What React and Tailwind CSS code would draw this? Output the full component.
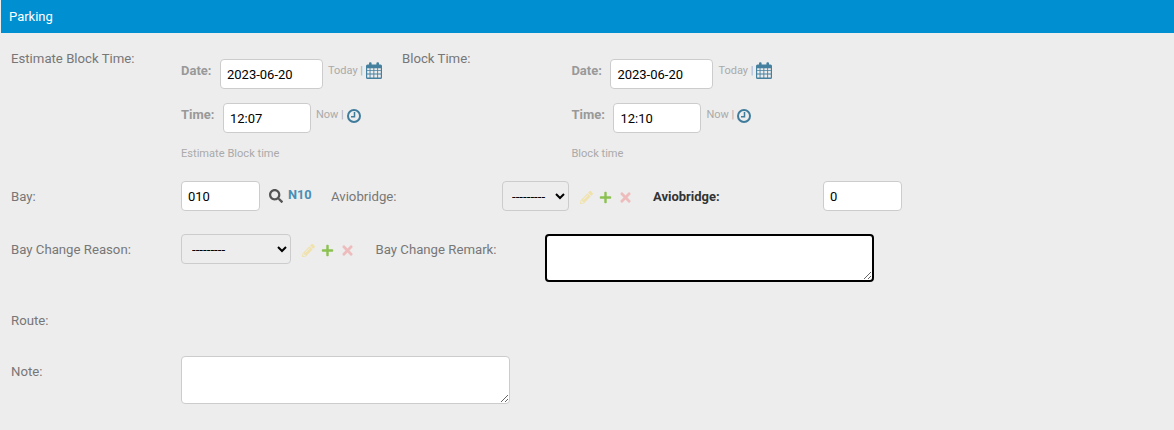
import React from 'react';
import { FaSearch, FaPencilAlt, FaPlus, FaTimes } from 'react-icons/fa';

const CalendarIcon = () => (
  <svg width="16" height="17" viewBox="0 0 16 17" className="text-[#45809f]">
    <path fill="currentColor" fillRule="evenodd" d="M1.5 2.5H3V1.2a1 1 0 0 1 1-1h.6a1 1 0 0 1 1 1v1.3h4.8V1.2a1 1 0 0 1 1-1h.6a1 1 0 0 1 1 1v1.3h1.5A1.5 1.5 0 0 1 16 4v11.5a1.5 1.5 0 0 1-1.5 1.5h-13A1.5 1.5 0 0 1 0 15.500V4a1.500 1.500 0 0 1 1.500-1.500ZM1.200 6.200v2h2.400v-2Zm3.300 0v2h2.900v-2Zm3.800 0v2h2.900v-2Zm3.800 0v2h2.700v-2ZM1.200 9.100v2.400h2.400V9.100Zm3.300 0v2.400h2.900V9.100Zm3.800 0v2.400h2.900V9.100Zm3.800 0v2.400h2.700V9.100ZM1.200 12.400v3.100h2.400v-3.100Zm3.300 0v3.100h2.900v-3.100Zm3.800 0v3.100h2.900v-3.100Zm3.800 0v3.100h2.700v-3.100Z" />
  </svg>
);

const ClockIcon = () => (
  <svg width="14" height="14" viewBox="0 0 14 14" className="text-[#3f7c9c]" fill="none" stroke="currentColor">
    <circle cx="7" cy="7" r="6" strokeWidth="2" />
    <path d="M7.500 3V7.700H4" strokeWidth="1.500" />
  </svg>
);

const inputClass = 'h-[30px] bg-white border border-[#ccc] rounded-[4px] px-[6px] text-[13px] text-black outline-none';

const DateTimeField = ({ date, time, hint }) => (
  <div className="w-[221px] shrink-0">
    <div className="flex items-start pt-[26px]">
      <span className="w-[39px] pt-[2px] text-[13px] font-bold text-[#999]">Date:</span>
      <input className={`${inputClass} w-[103px]`} defaultValue={date} />
      <span className="ml-[5px] pt-[4px] text-[11px] text-[#aaa]">Today |</span>
      <span className="ml-[3px] pt-[3px]"><CalendarIcon /></span>
    </div>
    <div className="flex items-start mt-[14px]">
      <span className="w-[42px] pt-[2px] text-[13px] font-bold text-[#999]">Time:</span>
      <input className={`${inputClass} w-[88px]`} defaultValue={time} />
      <span className="ml-[5px] pt-[4px] text-[11px] text-[#aaa]">Now |</span>
      <span className="ml-[3px] pt-[6px]"><ClockIcon /></span>
    </div>
    <div className="mt-[14px] text-[11.1px] leading-[14px] text-[#aaa]">{hint}</div>
  </div>
);

const RowActions = () => (
  <div className="flex items-center pt-[2px] text-[13px]">
    <FaPencilAlt className="text-[#f0e2ae]" />
    <FaPlus className="ml-[6px] text-[#8cc152]" />
    <FaTimes className="ml-[6px] text-[15px] text-[#eebcbc]" />
  </div>
);

const Label = ({ children, className = 'w-[170px]' }) => (
  <label className={`${className} shrink-0 text-[13.2px] text-[#777]`}>{children}</label>
);

export default function App() {
  return (
    <div className="h-[430px] overflow-hidden bg-[#ededed] pl-[1px] font-['Roboto',sans-serif]">
      <div className="h-[33px] bg-[#008fd1] pl-[8px] text-[13px] leading-[33px] text-white">Parking</div>

      <form className="pl-[10px]">
        <div className="flex">
          <Label className="w-[170px] pt-[16px]">Estimate Block Time:</Label>
          <DateTimeField date="2023-06-20" time="12:07" hint="Estimate Block time" />
          <Label className="w-[169.4px] pt-[16px]">Block Time:</Label>
          <DateTimeField date="2023-06-20" time="12:10" hint="Block time" />
        </div>

        <div className="flex items-center mt-[20px] h-[30px]">
          <Label className="w-[170px] pt-[2px]">Bay:</Label>
          <div className="flex items-center w-[150px] shrink-0">
            <input className={`${inputClass} w-[79px]`} defaultValue="010" />
            <FaSearch className="ml-[9px] text-[14px] text-[#555]" />
            <span className="ml-[5px] pb-[2px] text-[12.8px] font-bold text-[#4a8db5]">N10</span>
          </div>
          <Label className="w-[171px] pt-[2px]">Aviobridge:</Label>
          <select className="h-[30px] w-[67px] shrink-0 rounded-[4px] border border-[#ccc] bg-[#ededed] pl-[5px] text-[13.33px] text-black outline-none">
            <option>---------</option>
          </select>
          <div className="w-[84px] shrink-0 pl-[11px]"><RowActions /></div>
          <label className="w-[170px] shrink-0 pt-[2px] text-[13px] font-bold text-[#333]">Aviobridge:</label>
          <input className={`${inputClass} w-[79px]`} defaultValue="0" />
        </div>

        <div className="flex items-start mt-[23px]">
          <Label className="w-[170px] pt-[6px]">Bay Change Reason:</Label>
          <div className="flex items-center w-[194.5px] shrink-0 h-[30px]">
            <select className="h-[30px] w-[110px] shrink-0 rounded-[4px] border border-[#ccc] bg-[#ededed] pl-[6px] text-[13.33px] text-black outline-none">
              <option>---------</option>
            </select>
            <div className="pl-[11px]"><RowActions /></div>
          </div>
          <Label className="w-[169.5px] pt-[6px]">Bay Change Remark:</Label>
          <textarea className="block h-[48px] w-[329px] rounded-[4px] border-2 border-black bg-white outline-none" />
        </div>

        <div className="mt-[31px] h-[16px] text-[13.2px] leading-[16px] text-[#777]">Route:</div>

        <div className="flex items-start mt-[27px]">
          <Label className="w-[170px] pt-[6px]">Note:</Label>
          <textarea className="block h-[48px] w-[329px] rounded-[4px] border border-[#ccc] bg-white outline-none" />
        </div>
      </form>
    </div>
  );
}
